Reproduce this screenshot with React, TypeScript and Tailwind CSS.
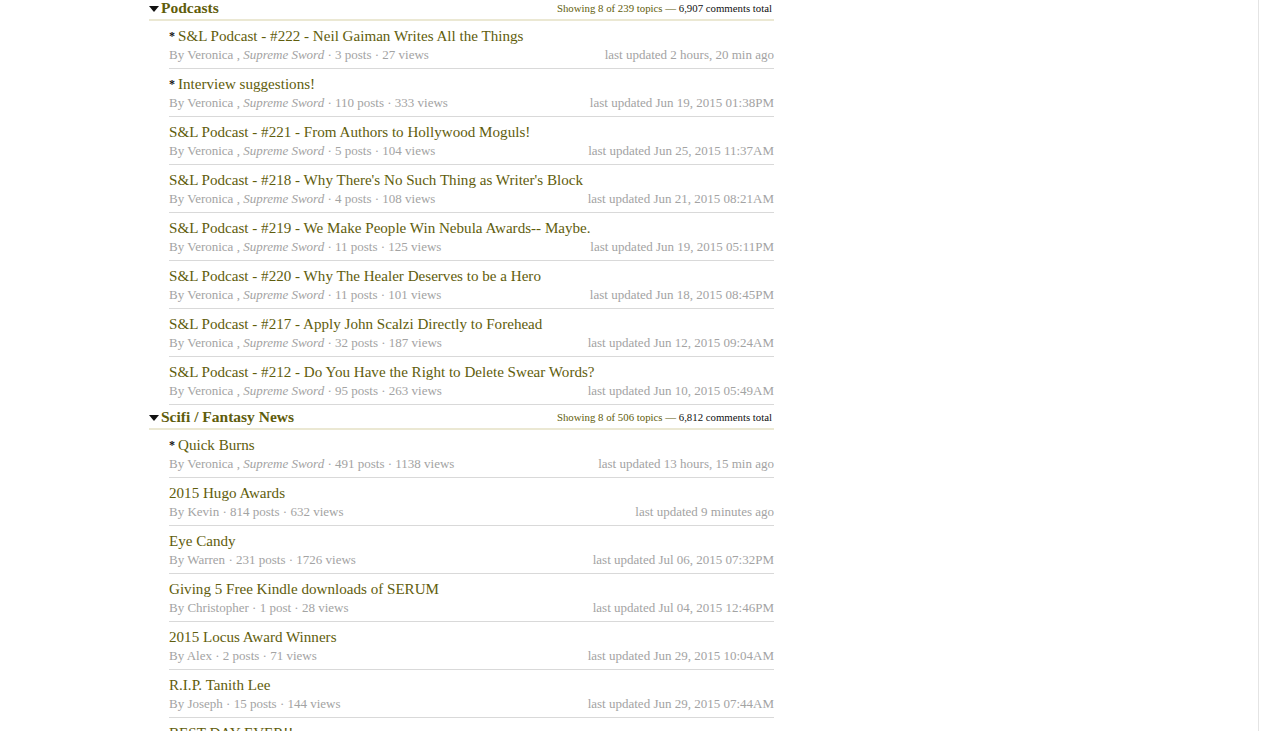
import React from "react";

type Topic = { title: string; sticky?: boolean; by: string; rank?: string; posts: string; views: string; updated: string };

const podcasts: Topic[] = [
  { title: "S&L Podcast - #222 - Neil Gaiman Writes All the Things", sticky: true, by: "Veronica", rank: "Supreme Sword", posts: "3 posts", views: "27 views", updated: "last updated 2 hours, 20 min ago" },
  { title: "Interview suggestions!", sticky: true, by: "Veronica", rank: "Supreme Sword", posts: "110 posts", views: "333 views", updated: "last updated Jun 19, 2015 01:38PM" },
  { title: "S&L Podcast - #221 - From Authors to Hollywood Moguls!", by: "Veronica", rank: "Supreme Sword", posts: "5 posts", views: "104 views", updated: "last updated Jun 25, 2015 11:37AM" },
  { title: "S&L Podcast - #218 - Why There's No Such Thing as Writer's Block", by: "Veronica", rank: "Supreme Sword", posts: "4 posts", views: "108 views", updated: "last updated Jun 21, 2015 08:21AM" },
  { title: "S&L Podcast - #219 - We Make People Win Nebula Awards-- Maybe.", by: "Veronica", rank: "Supreme Sword", posts: "11 posts", views: "125 views", updated: "last updated Jun 19, 2015 05:11PM" },
  { title: "S&L Podcast - #220 - Why The Healer Deserves to be a Hero", by: "Veronica", rank: "Supreme Sword", posts: "11 posts", views: "101 views", updated: "last updated Jun 18, 2015 08:45PM" },
  { title: "S&L Podcast - #217 - Apply John Scalzi Directly to Forehead", by: "Veronica", rank: "Supreme Sword", posts: "32 posts", views: "187 views", updated: "last updated Jun 12, 2015 09:24AM" },
  { title: "S&L Podcast - #212 - Do You Have the Right to Delete Swear Words?", by: "Veronica", rank: "Supreme Sword", posts: "95 posts", views: "263 views", updated: "last updated Jun 10, 2015 05:49AM" },
];

const news: Topic[] = [
  { title: "Quick Burns", sticky: true, by: "Veronica", rank: "Supreme Sword", posts: "491 posts", views: "1138 views", updated: "last updated 13 hours, 15 min ago" },
  { title: "2015 Hugo Awards", by: "Kevin", posts: "814 posts", views: "632 views", updated: "last updated 9 minutes ago" },
  { title: "Eye Candy", by: "Warren", posts: "231 posts", views: "1726 views", updated: "last updated Jul 06, 2015 07:32PM" },
  { title: "Giving 5 Free Kindle downloads of SERUM", by: "Christopher", posts: "1 post", views: "28 views", updated: "last updated Jul 04, 2015 12:46PM" },
  { title: "2015 Locus Award Winners", by: "Alex", posts: "2 posts", views: "71 views", updated: "last updated Jun 29, 2015 10:04AM" },
  { title: "R.I.P. Tanith Lee", by: "Joseph", posts: "15 posts", views: "144 views", updated: "last updated Jun 29, 2015 07:44AM" },
  { title: "BEST DAY EVER!!", by: "Ellen", posts: "9 posts", views: "88 views", updated: "last updated Jun 27, 2015 03:12PM" },
];

function Arrow() {
  return (
    <svg width="10" height="6" viewBox="0 0 10 6" className="mr-[2px] mt-[2px]">
      <polygon points="0,0 10,0 5,6" fill="#111" />
    </svg>
  );
}

function Header({ name, showing, total }: { name: string; showing: string; total: string }) {
  return (
    <div className="flex items-center justify-between border-b-2 border-[#ebe8d3] pt-[3px] pb-[2px] leading-[18px]">
      <div className="flex items-center">
        <Arrow />
        <span className="text-[15.5px] font-bold text-[#5f5d0c]">{name}</span>
      </div>
      <div className="mr-[2px] text-[10.8px] text-[#5f5d0c]">
        {showing} — <span className="text-[#111]">{total}</span>
      </div>
    </div>
  );
}

function Row({ t }: { t: Topic }) {
  return (
    <div className="ml-[20px] border-b border-[#d9d9d9] pt-[6px] pb-[4px]">
      <div className="text-[15.1px] leading-[19px] text-[#5f5d0c]">
        {t.sticky && <span className="mr-[3px] align-[1px] text-[12px] font-bold text-[#111]">*</span>}
        {t.title}
      </div>
      <div className="flex justify-between text-[13px] leading-[18px] text-[#a3a3a3]">
        <span>
          By {t.by}
          {t.rank && (
            <>
              {" , "}
              <i>{t.rank}</i>
            </>
          )}
          {" · "}
          {t.posts} · {t.views}
        </span>
        <span>{t.updated}</span>
      </div>
    </div>
  );
}

export default function App() {
  return (
    <div
      className="h-[731px] w-[1261px] overflow-hidden bg-white"
      style={{ fontFamily: '"Liberation Serif", "DejaVu Serif", serif' }}
    >
      <div className="flex h-full">
        <div className="h-full w-[1259px] border-r border-[#e4e4e4]">
          <div className="-mt-[4px] ml-[149px] w-[625px]">
            <Header name="Podcasts" showing="Showing 8 of 239 topics" total="6,907 comments total" />
            {podcasts.map((t, i) => (
              <Row key={i} t={t} />
            ))}
            <Header name="Scifi / Fantasy News" showing="Showing 8 of 506 topics" total="6,812 comments total" />
            {news.map((t, i) => (
              <Row key={i} t={t} />
            ))}
          </div>
        </div>
      </div>
    </div>
  );
}
